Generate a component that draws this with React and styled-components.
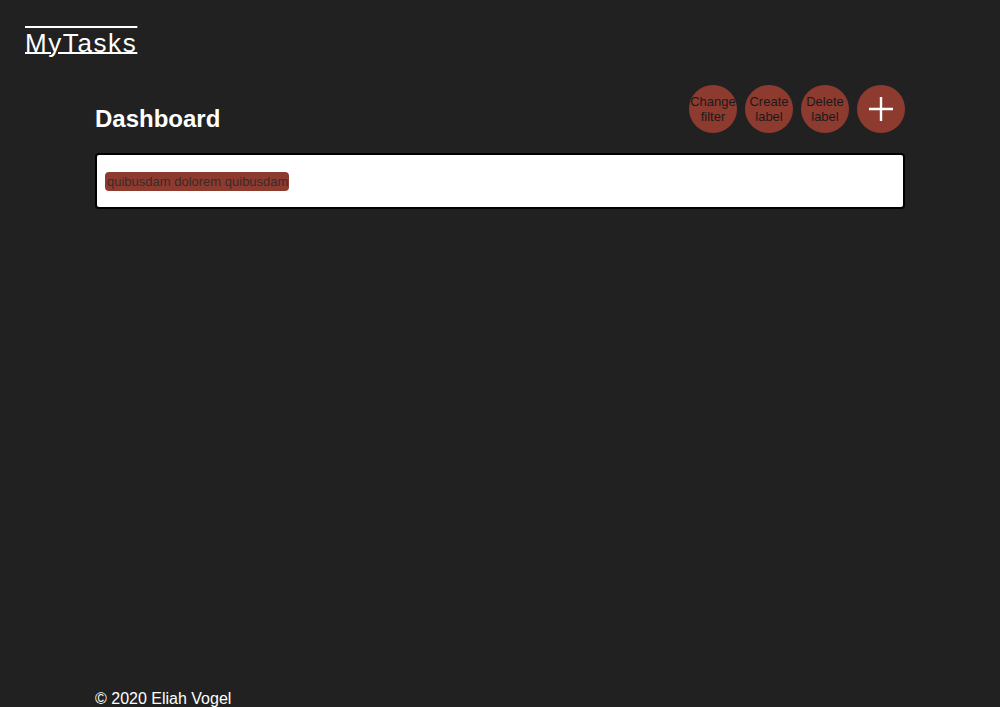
// Core
import React from 'react';

// Instruments
import styled, { createGlobalStyle } from 'styled-components';

const GlobalStyle = createGlobalStyle`
  html, body {
    margin: 0;
    padding: 0;
    background: #212121;
    font-family: "Liberation Sans", Arial, sans-serif;
    color: #fff;
  }
`;

const Page = styled.div`
  min-height: 100vh;
  display: flex;
  flex-direction: column;
`;

const Header = styled.header`
  height: 57px;
  box-sizing: border-box;
  padding: 27px 25px 0;
`;

const Logo = styled.a`
  font-size: 26px;
  letter-spacing: 1.6px;
  color: #fff;
  text-decoration: underline overline;
  text-decoration-thickness: 2px;
  text-underline-offset: 0;
  line-height: 32px;
`;

const Main = styled.main`
  flex: 1;
  width: 810px;
  margin: 0 auto;
`;

const TopBar = styled.div`
  display: flex;
  justify-content: space-between;
  align-items: center;
  margin-top: 28px;
`;

const Title = styled.h1`
  margin: 0;
  padding-top: 20px;
  font-size: 24px;
  line-height: 28px;
  font-weight: bold;
`;

const Actions = styled.div`
  display: flex;
  gap: 8px;
`;

const RoundButton = styled.button`
  width: 48px;
  height: 48px;
  border: none;
  border-radius: 50%;
  background: #8e3b2f;
  color: ${(p) => (p.light ? '#fff' : '#1a1a1a')};
  font-family: "Liberation Sans", Arial, sans-serif;
  font-size: 13px;
  line-height: 15px;
  padding: 0;
  display: flex;
  align-items: center;
  justify-content: center;
  text-align: center;
  cursor: pointer;
`;

const Card = styled.div`
  margin-top: 20px;
  background: #fff;
  border: 2px solid #000;
  border-radius: 4px;
  height: 52px;
  display: flex;
  align-items: center;
  padding: 0 8px;
`;

const Label = styled.span`
  background: #8e3b2f;
  color: #3a2a28;
  font-size: 13px;
  line-height: 19px;
  padding: 0 1px 0 2px;
  border-radius: 4px;
`;

const Footer = styled.footer`
  width: 810px;
  margin: 0 auto;
  font-size: 16px;
  line-height: 18px;
  height: 17px;
`;

const Plus = () => (
  <svg width="26" height="26" viewBox="0 0 26 26">
    <path d="M13 1v24M1 13h24" stroke="#fff" strokeWidth="2.4" />
  </svg>
);

export default function App() {
  return (
    <Page>
      <GlobalStyle />
      <Header>
        <Logo href="#">MyTasks</Logo>
      </Header>
      <Main>
        <TopBar>
          <Title>Dashboard</Title>
          <Actions>
            <RoundButton>Change<br />filter</RoundButton>
            <RoundButton>Create<br />label</RoundButton>
            <RoundButton>Delete<br />label</RoundButton>
            <RoundButton light><Plus /></RoundButton>
          </Actions>
        </TopBar>
        <Card>
          <Label>quibusdam dolorem quibusdam</Label>
        </Card>
      </Main>
      <Footer>© 2020 Eliah Vogel</Footer>
    </Page>
  );
}
